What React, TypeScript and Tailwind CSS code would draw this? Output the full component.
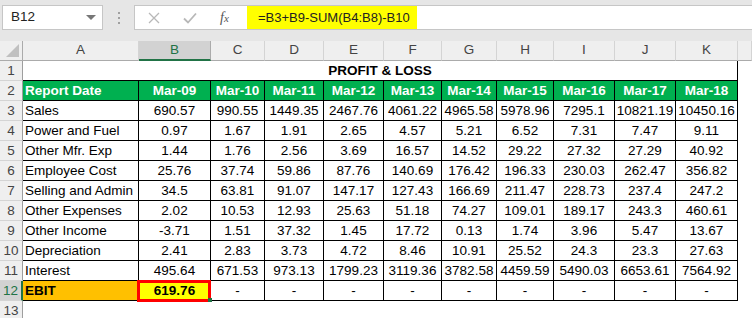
import React from "react";

const cols = ["A", "B", "C", "D", "E", "F", "G", "H", "I", "J", "K", ""];
const months = ["Mar-09", "Mar-10", "Mar-11", "Mar-12", "Mar-13", "Mar-14", "Mar-15", "Mar-16", "Mar-17", "Mar-18"];

const rows: [string, string[]][] = [
  ["Sales", ["690.57", "990.55", "1449.35", "2467.76", "4061.22", "4965.58", "5978.96", "7295.1", "10821.19", "10450.16"]],
  ["Power and Fuel", ["0.97", "1.67", "1.91", "2.65", "4.57", "5.21", "6.52", "7.31", "7.47", "9.11"]],
  ["Other Mfr. Exp", ["1.44", "1.76", "2.56", "3.69", "16.57", "14.52", "29.22", "27.32", "27.29", "40.92"]],
  ["Employee Cost", ["25.76", "37.74", "59.86", "87.76", "140.69", "176.42", "196.33", "230.03", "262.47", "356.82"]],
  ["Selling and Admin", ["34.5", "63.81", "91.07", "147.17", "127.43", "166.69", "211.47", "228.73", "237.4", "247.2"]],
  ["Other Expenses", ["2.02", "10.53", "12.93", "25.63", "51.18", "74.27", "109.01", "189.17", "243.3", "460.61"]],
  ["Other Income", ["-3.71", "1.51", "37.32", "1.45", "17.72", "0.13", "1.74", "3.96", "5.47", "13.67"]],
  ["Depreciation", ["2.41", "2.83", "3.73", "4.72", "8.46", "10.91", "25.52", "24.3", "23.3", "27.63"]],
  ["Interest", ["495.64", "671.53", "973.13", "1799.23", "3119.36", "3782.58", "4459.59", "5490.03", "6653.61", "7564.92"]],
];

const grid =
  "grid grid-cols-[23px_116px_72px_54px_59px_60px_58px_55px_57px_61px_61px_62px_1fr]";

function RowHead({ n, selected }: { n: number; selected?: boolean }) {
  return (
    <div
      className={
        "flex h-5 items-center justify-center border-b border-[#d4d4d4] pt-px text-[13.5px] " +
        (selected
          ? "border-r-2 border-r-[#217346] bg-[#d2d2d2] text-[#217346]"
          : "border-r border-r-[#9e9e9e] bg-[#efefef] text-[#444]")
      }
    >
      {n}
    </div>
  );
}

function Cell({ children, className = "" }: { children?: React.ReactNode; className?: string }) {
  return (
    <div className={"flex h-5 items-center whitespace-nowrap border-b border-r border-black px-[2px] pt-px text-[13.5px] " + className}>
      {children}
    </div>
  );
}

export default function App() {
  return (
    <div className="h-[318px] w-[752px] overflow-hidden bg-white font-['Liberation_Sans',Arial,sans-serif] text-black">
      {/* formula bar */}
      <div className="flex h-[41px] items-start bg-[#e6e6e6] pt-[5px]">
        <div className="ml-[2px] flex h-[25px] w-[101px] items-center justify-between border border-[#c6c6c6] bg-white pl-[8px] pr-[6px] text-[13.5px] text-[#222]">
          <span>B12</span>
          <span className="h-0 w-0 border-x-[5px] border-t-[5px] border-x-transparent border-t-[#777]" />
        </div>
        <div className="flex w-[31px] flex-col items-center gap-[3px] pt-[7px]">
          <span className="h-[2px] w-[2px] bg-[#a0a0a0]" />
          <span className="h-[2px] w-[2px] bg-[#a0a0a0]" />
          <span className="h-[2px] w-[2px] bg-[#a0a0a0]" />
        </div>
        <div className="flex h-[25px] flex-1 items-stretch border border-r-0 border-[#c6c6c6] bg-white">
          <div className="flex w-[112px] items-center">
            <svg width="12" height="12" viewBox="0 0 12 12" className="ml-[13px]">
              <path d="M1 1L11 11M11 1L1 11" stroke="#b8b8b8" strokeWidth="1.3" />
            </svg>
            <svg width="14" height="12" viewBox="0 0 14 12" className="ml-[23px]">
              <path d="M1 6.5L5 10.5L13 1.5" stroke="#b8b8b8" strokeWidth="1.8" fill="none" />
            </svg>
            <span className="ml-[23px] font-['Liberation_Serif',serif] text-[14px] italic text-[#555]">
              f<span className="text-[11px]">x</span>
            </span>
          </div>
          <div className="flex w-[170px] items-center bg-[#ffff00] pl-[11px] text-[13px] text-[#222]">
            =B3+B9-SUM(B4:B8)-B10
          </div>
        </div>
      </div>

      {/* sheet */}
      <div className={grid}>
        {/* column headers */}
        <div className="relative h-5 border-b border-r border-[#ababab] bg-[#efefef]">
          <span className="absolute bottom-[3px] right-[3px] h-0 w-0 border-b-[13px] border-l-[13px] border-b-[#c0c0c0] border-l-transparent" />
        </div>
        {cols.map((c, i) => (
          <div
            key={i}
            className={
              "flex h-5 items-center justify-center text-[13.5px] " +
              (c === "B"
                ? "border-b-2 border-r border-b-[#217346] border-r-[#ababab] bg-[#d2d2d2] text-[#217346]"
                : "border-b border-r border-b-[#ababab] border-r-[#d4d4d4] bg-[#efefef] text-[#444]")
            }
          >
            {c}
          </div>
        ))}

        {/* row 1 */}
        <RowHead n={1} />
        <div className="col-span-11 flex h-5 items-center justify-center border-b border-r border-black pt-px text-[13.5px] font-bold">
          PROFIT &amp; LOSS
        </div>
        <div />

        {/* row 2 */}
        <RowHead n={2} />
        <Cell className="bg-[#00b050] font-bold text-white">Report Date</Cell>
        {months.map((m) => (
          <Cell key={m} className="justify-center bg-[#00b050] font-bold text-white">
            {m}
          </Cell>
        ))}
        <div />

        {rows.map(([label, vals], r) => (
          <React.Fragment key={label}>
            <RowHead n={r + 3} />
            <Cell>{label}</Cell>
            {vals.map((v, i) => (
              <Cell key={i} className="justify-center">
                {v}
              </Cell>
            ))}
            <div />
          </React.Fragment>
        ))}

        {/* row 12 */}
        <RowHead n={12} selected />
        <Cell className="bg-[#ffc000] font-bold">EBIT</Cell>
        <Cell className="relative justify-center bg-[#ffff00] font-bold">
          619.76
          <span className="absolute -left-[2px] -top-[1px] h-[22px] w-[74px] border-[3px] border-[#ff0000]" />
          <span className="absolute -bottom-[2px] -right-[2px] h-[4px] w-[4px] bg-[#217346]" />
        </Cell>
        {months.slice(1).map((m) => (
          <Cell key={m} className="justify-center">
            -
          </Cell>
        ))}
        <div />

        {/* row 13 */}
        <RowHead n={13} />
      </div>
    </div>
  );
}
